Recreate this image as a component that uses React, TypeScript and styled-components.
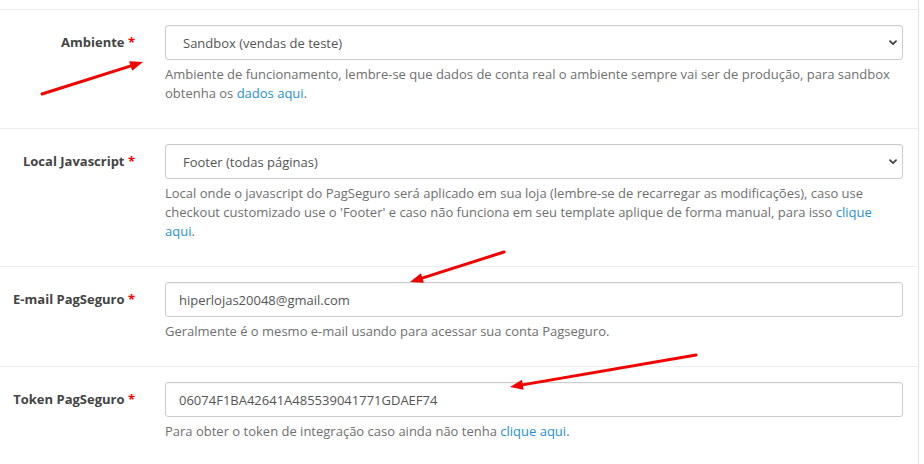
import React from "react";
import styled, { createGlobalStyle } from "styled-components";

const GlobalStyle = createGlobalStyle`
  html, body { margin: 0; padding: 0; background: #ffffff; }
  body {
    font-family: "Open Sans", "Noto Sans", "Liberation Sans", sans-serif;
    font-size: 13px;
    line-height: 19px;
    color: #666;
  }
  * { box-sizing: border-box; }
`;

const Page = styled.div`
  position: relative;
  width: 924px;
  height: 464px;
  overflow: hidden;
  background: #fff;
`;

const Panel = styled.div`
  width: 919px;
  padding-top: 9px;
  border-right: 1px solid #e2e2e2;
  min-height: 464px;
  background: #fff;
`;

const FormGroup = styled.div`
  display: flex;
  border-top: 1px solid #ededed;
  padding: 15px 0;
`;

const LabelCol = styled.label`
  flex: 0 0 150px;
  padding: 8px 15px 0 0;
  text-align: right;
  font-weight: 700;
  color: #444;
  font-size: 13px;
  line-height: 19px;
`;

const Required = styled.span`
  color: #f00;
  font-weight: 700;
`;

const FieldCol = styled.div`
  flex: 1;
  padding: 0 15px;
`;

const SelectWrap = styled.div`
  position: relative;
`;

const Select = styled.select`
  appearance: none;
  -webkit-appearance: none;
  display: block;
  width: 100%;
  height: 35px;
  padding: 0 30px 0 17px;
  border: 1px solid #ccc;
  border-radius: 3px;
  background: #fff;
  color: #555;
  font-family: inherit;
  font-size: 13px;
  box-shadow: inset 0 1px 1px rgba(0, 0, 0, 0.04);
  outline: none;
`;

const Chevron = styled.svg`
  position: absolute;
  right: 6px;
  top: 15px;
  width: 8px;
  height: 6px;
  pointer-events: none;
`;

const Input = styled.input`
  display: block;
  width: 100%;
  height: 35px;
  padding: 0 13px;
  border: 1px solid #ccc;
  border-radius: 3px;
  background: #fff;
  color: #555;
  font-family: inherit;
  font-size: 13px;
  box-shadow: inset 0 1px 1px rgba(0, 0, 0, 0.04);
  outline: none;
`;

const Help = styled.div`
  margin: 5px 0 10px;
  color: #6f6f6f;
  font-size: 13px;
  line-height: 19px;
`;

const Link = styled.a`
  color: #1e91cf;
  text-decoration: none;
`;

const Overlay = styled.svg`
  position: absolute;
  left: 0;
  top: 0;
  width: 924px;
  height: 464px;
  pointer-events: none;
`;

type ArrowProps = { x1: number; y1: number; x2: number; y2: number };

const Arrow: React.FC<ArrowProps> = ({ x1, y1, x2, y2 }) => {
  const dx = x2 - x1;
  const dy = y2 - y1;
  const len = Math.hypot(dx, dy);
  const ux = dx / len;
  const uy = dy / len;
  const hl = 13;
  const hw = 5;
  const bx = x2 - ux * hl;
  const by = y2 - uy * hl;
  const p1 = `${x2},${y2}`;
  const p2 = `${bx - uy * hw},${by + ux * hw}`;
  const p3 = `${bx + uy * hw},${by - ux * hw}`;
  return (
    <g>
      <line x1={x1} y1={y1} x2={bx + ux * 2} y2={by + uy * 2} stroke="#f20000" strokeWidth={3} strokeLinecap="round" />
      <polygon points={`${p1} ${p2} ${p3}`} fill="#f20000" />
    </g>
  );
};

const ChevronIcon = () => (
  <Chevron viewBox="0 0 8 6">
    <path d="M1 1.2 L4 4.2 L7 1.2" fill="none" stroke="#444" strokeWidth={1.8} strokeLinecap="round" strokeLinejoin="round" />
  </Chevron>
);

export default function App() {
  return (
    <Page>
      <GlobalStyle />
      <Panel>
        <FormGroup>
          <LabelCol>
            Ambiente <Required>*</Required>
          </LabelCol>
          <FieldCol>
            <SelectWrap>
              <Select defaultValue="sandbox">
                <option value="sandbox">Sandbox (vendas de teste)</option>
                <option value="producao">Produção</option>
              </Select>
              <ChevronIcon />
            </SelectWrap>
            <Help>
              Ambiente de funcionamento, lembre-se que dados de conta real o ambiente sempre vai ser de produção, para sandbox
              obtenha os <Link href="#">dados aqui</Link>.
            </Help>
          </FieldCol>
        </FormGroup>
        <FormGroup>
          <LabelCol>
            Local Javascript <Required>*</Required>
          </LabelCol>
          <FieldCol>
            <SelectWrap>
              <Select defaultValue="footer">
                <option value="footer">Footer (todas páginas)</option>
                <option value="header">Header</option>
              </Select>
              <ChevronIcon />
            </SelectWrap>
            <Help>
              Local onde o javascript do PagSeguro será aplicado em sua loja (lembre-se de recarregar as modificações), caso use
              checkout customizado use o 'Footer' e caso não funciona em seu template aplique de forma manual, para isso{" "}
              <Link href="#">clique aqui</Link>.
            </Help>
          </FieldCol>
        </FormGroup>
        <FormGroup>
          <LabelCol>
            E-mail PagSeguro <Required>*</Required>
          </LabelCol>
          <FieldCol>
            <Input type="text" defaultValue="hiperlojas20048@gmail.com" />
            <Help>Geralmente é o mesmo e-mail usando para acessar sua conta Pagseguro.</Help>
          </FieldCol>
        </FormGroup>
        <FormGroup>
          <LabelCol>
            Token PagSeguro <Required>*</Required>
          </LabelCol>
          <FieldCol>
            <Input type="text" defaultValue="06074F1BA42641A485539041771GDAEF74" />
            <Help>
              Para obter o token de integração caso ainda não tenha <Link href="#">clique aqui</Link>.
            </Help>
          </FieldCol>
        </FormGroup>
      </Panel>
      <Overlay viewBox="0 0 924 464">
        <Arrow x1={42} y1={94} x2={143} y2={62} />
        <Arrow x1={504} y1={252} x2={410} y2={282} />
        <Arrow x1={696} y1={355} x2={510} y2={387} />
      </Overlay>
    </Page>
  );
}
